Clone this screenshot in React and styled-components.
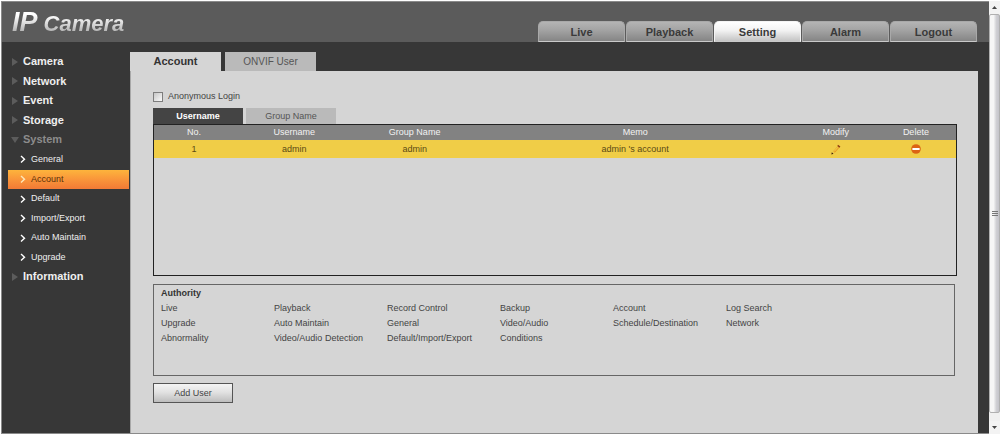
import React, { useState } from "react";
import styled, { createGlobalStyle } from "styled-components";

const GlobalStyle = createGlobalStyle`
  * {
    box-sizing: border-box;
  }
  body {
    margin: 0;
    background: #fff;
    color: #444;
    font: 9px/15px "Liberation Sans", Arial, sans-serif;
  }
  button {
    font: inherit;
    color: inherit;
    padding: 0;
    border: 0;
    cursor: pointer;
  }
  a {
    color: inherit;
    text-decoration: none;
  }
`;

const Page = styled.div`
  display: flex;
  min-height: 100vh;
  padding: 1px 0 1px 1px;
`;

const Frame = styled.div`
  flex: 1;
  min-width: 0;
  display: flex;
  flex-direction: column;
  background: #373737;
  border: 1px solid #8a8a8a;
  border-right: 0;
`;

const Header = styled.header`
  display: flex;
  justify-content: space-between;
  align-items: flex-end;
  height: 40px;
  padding: 0 12px 0 9px;
  background: #5b5b5b;
`;

const Logo = styled.h1`
  display: flex;
  align-items: baseline;
  gap: 6px;
  margin: 0;
  font-size: 22px;
  font-weight: bold;
  font-style: italic;
  line-height: 32px;
  color: transparent;
  background: linear-gradient(#fff 25%, #d8d8d8 50%, #9c9c9c 85%);
  background-clip: text;
  padding: 0 4px 2px 1px;

  span {
    font-size: 27px;
  }
`;

const Nav = styled.nav`
  display: flex;
  gap: 1px;
`;

const NavTab = styled.a`
  width: 87px;
  height: 21px;
  border-radius: 5px 5px 0 0;
  border: 1px solid ${(props) => (props.$active ? "#f4f4f4" : "#a9a9a9")};
  border-bottom-color: #c9c9c9;
  background: ${(props) =>
    props.$active
      ? "linear-gradient(#ffffff, #f2f2f2 45%, #c4c4c4)"
      : "linear-gradient(#b4b4b4, #a2a2a2 45%, #858585)"};
  color: #3a3a3a;
  font-size: 11px;
  font-weight: bold;
  line-height: 20px;
  text-align: center;
`;

const Body = styled.div`
  flex: 1;
  display: flex;
  padding: 10px 11px 0 0;
`;

const Sidebar = styled.ul`
  display: grid;
  grid-auto-rows: 1fr;
  align-self: flex-start;
  flex: 0 0 128px;
  height: 235px;
  margin: 0;
  padding: 0 1px 0 6px;
  list-style: none;
`;

const MenuLink = styled.a`
  display: flex;
  align-items: center;
  height: 19px;
  gap: 4px;
  padding-left: 3px;
  color: ${(props) => (props.$open ? "#8c8c8c" : "#efefef")};
  font-size: 11px;
  font-weight: bold;
`;

const SubLink = styled.a`
  display: flex;
  align-items: center;
  height: 19px;
  gap: 5px;
  padding-left: 12px;
  color: ${(props) => (props.$active ? "#5b3008" : "#efefef")};
  background: ${(props) =>
    props.$active ? "linear-gradient(#fdb43c, #f9953a 50%, #f27a35)" : "none"};
`;

const Main = styled.main`
  flex: 1;
  min-width: 0;
  display: flex;
  flex-direction: column;
`;

const PageTabs = styled.div`
  display: flex;
  gap: 4px;
`;

const PageTab = styled.button`
  width: 91px;
  height: 19px;
  background: ${(props) => (props.$active ? "#d5d5d5" : "#bababa")};
  color: ${(props) => (props.$active ? "#333" : "#555")};
  font-size: ${(props) => (props.$active ? "11px" : "10px")};
  font-weight: ${(props) => (props.$active ? "bold" : "normal")};
  line-height: 19px;
`;

const Panel = styled.div`
  flex: 1;
  padding: 18px 21px 24px 22px;
  background: #d5d5d5;
  border-left: 1px solid #a8a8a8;
`;

const CheckLabel = styled.label`
  display: flex;
  align-items: center;
  gap: 5px;
  margin-bottom: 4px;
`;

const CheckBox = styled.input`
  appearance: none;
  width: 10px;
  height: 10px;
  margin: 0;
  border: 1px solid #7d7d7d;
  background: linear-gradient(135deg, #c6c6c6, #fafafa);

  &:checked {
    background: #444;
  }
`;

const ListTabs = styled.div`
  display: flex;
  gap: 3px;
`;

const ListTab = styled.button`
  width: 90px;
  height: 16px;
  background: ${(props) => (props.$active ? "#444" : "#bababa")};
  color: ${(props) => (props.$active ? "#fff" : "#555")};
  font-weight: ${(props) => (props.$active ? "bold" : "normal")};
`;

const TableBox = styled.div`
  height: 152px;
  border: 1px solid #222;
`;

const Table = styled.table`
  width: 100%;
  table-layout: fixed;
  border-collapse: collapse;
  text-align: center;

  th {
    height: 15px;
    padding: 0;
    background: #828282;
    color: #f2f2f2;
    font-weight: normal;
  }
  td {
    height: 18px;
    padding: 0;
    background: #f0cd47;
    color: #5b4a14;
  }
`;

const Col = styled.col`
  width: ${(props) => props.$width};
`;

const IconButton = styled.button`
  display: block;
  margin: 0 auto;
  background: none;

  svg {
    display: block;
  }
`;

const Authority = styled.section`
  height: 92px;
  margin: 8px 2px 7px 0;
  padding: 1px 7px;
  border: 1px solid #666;
`;

const AuthorityTitle = styled.h2`
  margin: 0;
  font-size: 9px;
  color: #333;
`;

const AuthorityList = styled.ul`
  display: grid;
  grid-template-columns: repeat(6, 113px);
  margin: 0;
  padding: 0;
  list-style: none;
`;

const AddButton = styled.button`
  width: 80px;
  height: 20px;
  border: 1px solid #555;
  background: linear-gradient(#f4f4f4, #e2e2e2 45%, #bdbdbd);
`;

const Scrollbar = styled.div`
  flex: 0 0 11px;
  display: flex;
  flex-direction: column;
  background: #f0f0f0;
`;

const ScrollButton = styled.button`
  display: flex;
  align-items: center;
  justify-content: center;
  height: 13px;
  background: #f3f3f3;
`;

const Thumb = styled.div`
  flex: 1;
  display: flex;
  align-items: center;
  justify-content: center;
  margin-bottom: 8px;
  border: 1px solid #b0b0b0;
  border-radius: 2px;
  background: linear-gradient(to right, #f6f6f6 40%, #d0d0d4 70%, #c4c4ca);
`;

const navItems = ["Live", "Playback", "Setting", "Alarm", "Logout"];

const menu = [
  { name: "Camera" },
  { name: "Network" },
  { name: "Event" },
  { name: "Storage" },
  { name: "System", open: true },
  { name: "General", sub: true },
  { name: "Account", sub: true },
  { name: "Default", sub: true },
  { name: "Import/Export", sub: true },
  { name: "Auto Maintain", sub: true },
  { name: "Upgrade", sub: true },
  { name: "Information" },
];

const columns = [
  { name: "No.", width: "10%" },
  { name: "Username", width: "15%" },
  { name: "Group Name", width: "15%" },
  { name: "Memo", width: "40%" },
  { name: "Modify", width: "10%" },
  { name: "Delete", width: "10%" },
];

const users = [
  { no: 1, name: "admin", group: "admin", memo: "admin 's account" },
];

const authorities = [
  "Live",
  "Playback",
  "Record Control",
  "Backup",
  "Account",
  "Log Search",
  "Upgrade",
  "Auto Maintain",
  "General",
  "Video/Audio",
  "Schedule/Destination",
  "Network",
  "Abnormality",
  "Video/Audio Detection",
  "Default/Import/Export",
  "Conditions",
];

const MenuArrow = ({ open }) => (
  <svg width="8" height="8" viewBox="0 0 8 8">
    <path d={open ? "M0 1h8L4 7z" : "M1 0l6 4-6 4z"} fill="#5c5c5c" />
  </svg>
);

const Chevron = ({ active }) => (
  <svg width="6" height="8" viewBox="0 0 6 8">
    <path
      d="M1 1l3.5 3.2L1 7.500"
      fill="none"
      stroke={active ? "#ffe9b8" : "#fff"}
      strokeWidth="1.400"
    />
  </svg>
);

const PencilIcon = () => (
  <svg width="10" height="11" viewBox="0 0 10 11">
    <path d="M3 8L7.500 3" stroke="#e8a020" strokeWidth="2.200" />
    <path d="M3.200 7.400L7 3.200" stroke="#f8d868" strokeWidth="0.800" />
    <path d="M7 0.800l2.400 1.600-1 1.400L6.400 2z" fill="#8c3a12" />
    <path d="M0.400 10.400l0.400-2.200 1.700 1.500z" fill="#3a1a08" />
  </svg>
);

const DeleteIcon = () => (
  <svg width="10" height="10" viewBox="0 0 10 10">
    <circle cx="5" cy="5" r="4.800" fill="#dc6414" />
    <rect x="1.400" y="4" width="7.200" height="2" fill="#fff" />
  </svg>
);

const App = () => {
  const [current, setCurrent] = useState("Account");
  const [pageTab, setPageTab] = useState("Account");
  const [listTab, setListTab] = useState("Username");

  return (
    <Page>
      <GlobalStyle />
      <Frame>
        <Header>
          <Logo>
            <span>IP</span> Camera
          </Logo>
          <Nav>
            {navItems.map((item) => (
              <NavTab key={item} href="#" $active={item === "Setting"}>
                {item}
              </NavTab>
            ))}
          </Nav>
        </Header>
        <Body>
          <Sidebar>
            {menu.map((item) => (
              <li key={item.name}>
                {item.sub ? (
                  <SubLink
                    href="#"
                    $active={item.name === current}
                    onClick={() => setCurrent(item.name)}
                  >
                    <Chevron active={item.name === current} />
                    {item.name}
                  </SubLink>
                ) : (
                  <MenuLink href="#" $open={item.open}>
                    <MenuArrow open={item.open} />
                    {item.name}
                  </MenuLink>
                )}
              </li>
            ))}
          </Sidebar>
          <Main>
            <PageTabs>
              {["Account", "ONVIF User"].map((tab) => (
                <PageTab
                  key={tab}
                  $active={tab === pageTab}
                  onClick={() => setPageTab(tab)}
                >
                  {tab}
                </PageTab>
              ))}
            </PageTabs>
            <Panel>
              <CheckLabel>
                <CheckBox type="checkbox" />
                Anonymous Login
              </CheckLabel>
              <ListTabs>
                {["Username", "Group Name"].map((tab) => (
                  <ListTab
                    key={tab}
                    $active={tab === listTab}
                    onClick={() => setListTab(tab)}
                  >
                    {tab}
                  </ListTab>
                ))}
              </ListTabs>
              <TableBox>
                <Table>
                  <colgroup>
                    {columns.map((col) => (
                      <Col key={col.name} $width={col.width} />
                    ))}
                  </colgroup>
                  <thead>
                    <tr>
                      {columns.map((col) => (
                        <th key={col.name}>{col.name}</th>
                      ))}
                    </tr>
                  </thead>
                  <tbody>
                    {users.map((user) => (
                      <tr key={user.no}>
                        <td>{user.no}</td>
                        <td>{user.name}</td>
                        <td>{user.group}</td>
                        <td>{user.memo}</td>
                        <td>
                          <IconButton aria-label="Modify">
                            <PencilIcon />
                          </IconButton>
                        </td>
                        <td>
                          <IconButton aria-label="Delete">
                            <DeleteIcon />
                          </IconButton>
                        </td>
                      </tr>
                    ))}
                  </tbody>
                </Table>
              </TableBox>
              <Authority>
                <AuthorityTitle>Authority</AuthorityTitle>
                <AuthorityList>
                  {authorities.map((name) => (
                    <li key={name}>{name}</li>
                  ))}
                </AuthorityList>
              </Authority>
              <AddButton>Add User</AddButton>
            </Panel>
          </Main>
        </Body>
      </Frame>
      <Scrollbar>
        <ScrollButton aria-label="Scroll up">
          <svg width="5" height="3" viewBox="0 0 5 3">
            <path d="M0 3h5L2.500 0z" fill="#444" />
          </svg>
        </ScrollButton>
        <Thumb>
          <svg width="6" height="6" viewBox="0 0 6 6">
            <path d="M0 0.500h6M0 2.500h6M0 4.500h6" stroke="#777" />
          </svg>
        </Thumb>
        <ScrollButton aria-label="Scroll down">
          <svg width="5" height="3" viewBox="0 0 5 3">
            <path d="M0 0h5L2.500 3z" fill="#444" />
          </svg>
        </ScrollButton>
      </Scrollbar>
    </Page>
  );
};

export default App;
